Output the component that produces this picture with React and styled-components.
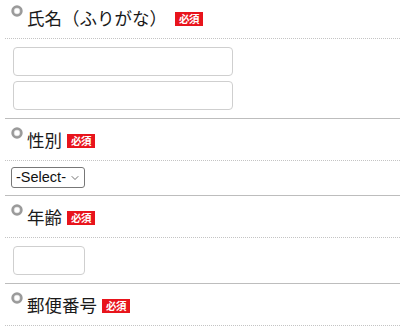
import styled, { createGlobalStyle } from 'styled-components'
import { ChevronDown } from 'lucide-react'

const GlobalStyle = createGlobalStyle`
  html, body {
    margin: 0;
    padding: 0;
    background: #fff;
  }
  body {
    font-family: "Noto Sans CJK JP", "Noto Sans", sans-serif;
    color: #222;
  }
`

const Form = styled.div`
  margin: -4px 0 0 5px;
`

const Section = styled.section`
  border-top: 1px solid #bdbdbd;
`

const Heading = styled.div`
  display: flex;
  align-items: center;
  height: 41px;
  padding-left: 6px;
  border-bottom: 1px dotted #c4c4c4;
`

const Dot = styled.svg`
  align-self: flex-start;
  margin-top: 8px;
  flex: none;
`

const Label = styled.span`
  font-size: 17.5px;
  line-height: 1;
  margin-left: 4px;
  color: #1a1a1a;
`

const Required = styled.span`
  display: inline-block;
  margin-left: ${p => p.$gap || 5}px;
  margin-top: 2px;
  background: #e8141c;
  color: #fff;
  font-size: 10.5px;
  font-weight: 700;
  line-height: 14px;
  padding: 0 4px;
  letter-spacing: -0.5px;
`

const Body = styled.div`
  display: flex;
  flex-direction: column;
  align-items: flex-start;
  gap: 5px;
  padding: ${p => p.$pad || '8px 8px'};
`

const TextInput = styled.input`
  box-sizing: border-box;
  width: ${p => p.$width || 220}px;
  height: 29px;
  border: 1px solid #cfcfcf;
  border-radius: 4px;
  background: #fff;
  outline: none;
`

const SelectWrap = styled.div`
  position: relative;
  display: flex;
`

const Select = styled.select`
  appearance: none;
  box-sizing: border-box;
  width: 74px;
  height: 21px;
  padding: 0 0 0 4px;
  border: 1px solid #777;
  border-radius: 3px;
  background: #fff;
  color: #111;
  font-family: "Liberation Sans", Arial, sans-serif;
  font-size: 14.5px;
  line-height: 19px;
`

const Caret = styled(ChevronDown)`
  position: absolute;
  right: 4px;
  top: 5px;
  pointer-events: none;
`

const Ring = () => (
  <Dot width="12" height="12" viewBox="0 0 12 12">
    <circle cx="6" cy="6" r="4.3" fill="#fff" stroke="#9a9a9a" strokeWidth="2.8" />
    <circle cx="6" cy="6" r="2.9" fill="none" stroke="#d8d8d8" strokeWidth="0.6" />
  </Dot>
)

const Field = ({ label, gap, children, pad }) => (
  <Section>
    <Heading>
      <Ring />
      <Label>{label}</Label>
      <Required $gap={gap}>必須</Required>
    </Heading>
    {children && <Body $pad={pad}>{children}</Body>}
  </Section>
)

export default function App() {
  return (
    <>
      <GlobalStyle />
      <Form>
        <Field label="氏名（ふりがな）" gap={8} pad="8px 8px 8px">
          <TextInput type="text" />
          <TextInput type="text" />
        </Field>
        <Field label="性別" pad="6px 6px 7px">
          <SelectWrap>
            <Select defaultValue="">
              <option value="">-Select-</option>
              <option value="m">男性</option>
              <option value="f">女性</option>
            </Select>
            <Caret size={12} strokeWidth={1.4} color="#333" />
          </SelectWrap>
        </Field>
        <Field label="年齢" pad="8px 8px 8px">
          <TextInput type="text" $width={72} />
        </Field>
        <Field label="郵便番号" />
      </Form>
    </>
  )
}
